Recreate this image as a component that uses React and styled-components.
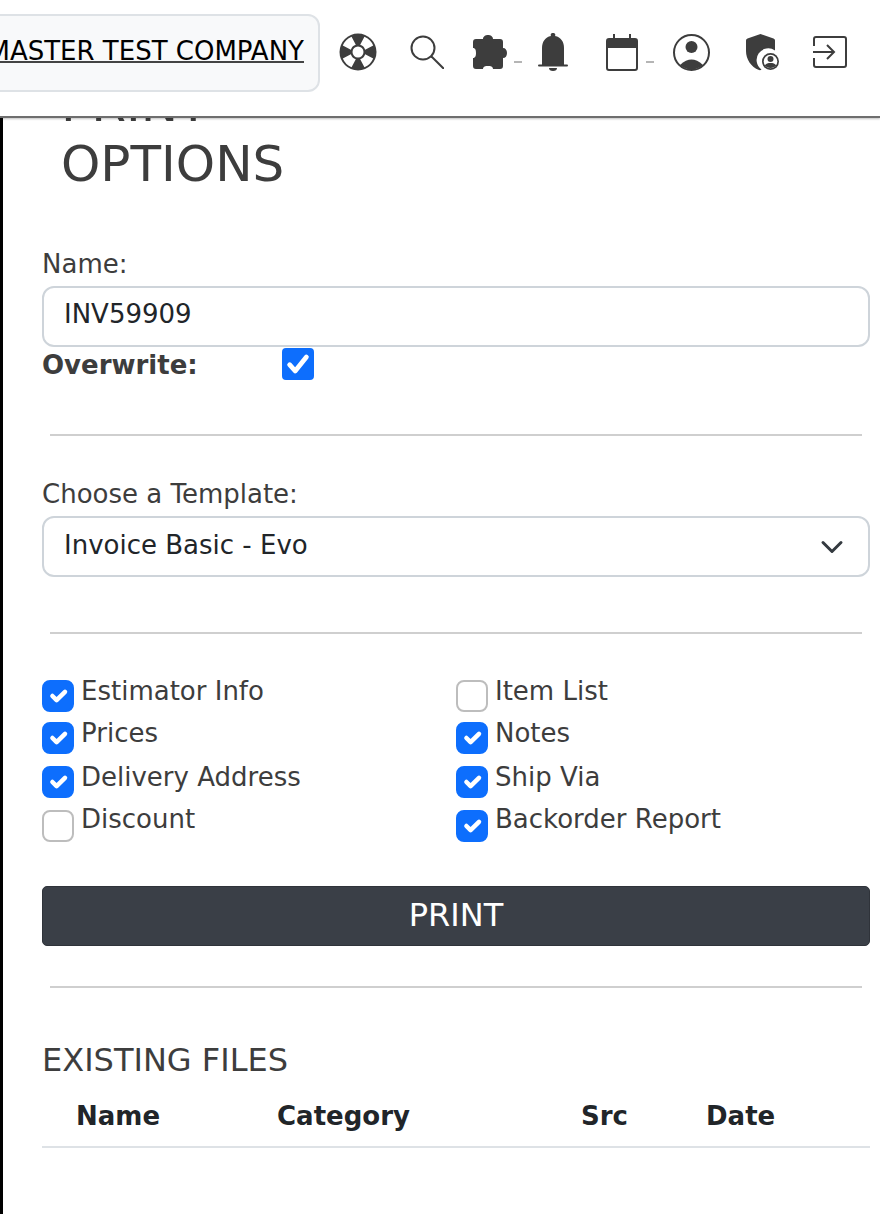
import React from 'react';
import styled, { createGlobalStyle } from 'styled-components';

const Global = createGlobalStyle`
  html, body {
    margin: 0;
    height: 100%;
    overflow: hidden;
    background: #fff;
    font-family: "DejaVu Sans", sans-serif;
    color: #3d3d3d;
  }
  * { box-sizing: border-box; }
`;

const Page = styled.div`
  width: 880px;
  height: 1214px;
  overflow: hidden;
`;

const Topbar = styled.header`
  position: relative;
  z-index: 2;
  height: 118px;
  display: flex;
  justify-content: flex-end;
  align-items: flex-start;
  padding: 14px 22px 0 0;
  background: #fff;
  border-bottom: 2px solid #6e6e6e;
  box-shadow: 0 1px 2px rgba(0, 0, 0, 0.25);
`;

const Company = styled.a`
  flex-shrink: 0;
  height: 78px;
  display: flex;
  align-items: center;
  padding: 0 14px 4px 40px;
  margin-right: 2px;
  background: #f8f9fa;
  border: 2px solid #dee2e6;
  border-radius: 12px;
  color: #000;
  font-size: 26px;
  text-decoration: underline;
  text-decoration-thickness: 2px;
  text-decoration-color: #444;
`;

const IconSlot = styled.div`
  position: relative;
  flex-shrink: 0;
  width: ${(p) => p.$w}px;
  height: 76px;
  display: flex;
  justify-content: center;
  align-items: center;
  color: #3d3d3d;
  svg { display: block; }
`;

const Dash = styled.span`
  position: absolute;
  left: ${(p) => p.$left}px;
  top: 47px;
  width: 8px;
  height: 2px;
  background: #b5b5b5;
`;

const Main = styled.main`
  display: flow-root;
  height: 1096px;
  border-left: 3px solid #000;
  padding: 0 10px 0 39px;
`;

const Title = styled.h1`
  width: 320px;
  margin: -44px 0 0 19px;
  font-size: 50px;
  font-weight: 400;
  line-height: 60px;
  color: #3d3d3d;
`;

const Label = styled.label`
  display: block;
  margin-bottom: 4px;
  font-size: 26px;
  line-height: 38px;
  color: #3d3d3d;
`;

const TextInput = styled.input`
  display: block;
  width: 100%;
  height: 61px;
  margin-top: -1px;
  padding: 0 20px 6px;
  background: #fff;
  border: 2px solid #ced4da;
  border-radius: 12px;
  font: inherit;
  font-size: 26px;
  color: #212529;
  outline: none;
`;

const OverwriteRow = styled.div`
  display: flex;
  align-items: flex-start;
  height: 34px;
  margin-top: 1px;
`;

const OverwriteLabel = styled.label`
  width: 240px;
  font-size: 26px;
  font-weight: 700;
  line-height: 34px;
`;

const Check = styled.input`
  appearance: none;
  flex-shrink: 0;
  display: block;
  width: 32px;
  height: 32px;
  margin: ${(p) => p.$mt || 0}px 0 0;
  background-color: #fff;
  border: 2px solid #bdbdbd;
  border-radius: 8px;
  &:checked {
    background-color: #0d6efd;
    border-color: #0d6efd;
    background-position: center;
    background-repeat: no-repeat;
    background-image: url("data:image/svg+xml,%3csvg xmlns='http://www.w3.org/2000/svg' viewBox='0 0 20 20'%3e%3cpath fill='none' stroke='%23fff' stroke-linecap='round' stroke-linejoin='round' stroke-width='3.2' d='m6 10 3 3 6-6'/%3e%3c/svg%3e");
  }
`;

const BigCheck = styled(Check)`
  border-radius: 4px;
  &:checked {
    background-image: url("data:image/svg+xml,%3csvg xmlns='http://www.w3.org/2000/svg' viewBox='0 0 20 20'%3e%3cpath fill='none' stroke='%23fff' stroke-linecap='round' stroke-linejoin='round' stroke-width='3.4' d='M4 10.5l4 4.5 8-10'/%3e%3c/svg%3e");
  }
`;

const Rule = styled.hr`
  margin: ${(p) => p.$top}px 8px 0;
  border: 0;
  border-top: 2px solid #cfcfcf;
`;

const Section = styled.section`
  margin-top: ${(p) => p.$top}px;
`;

const Select = styled.select`
  appearance: none;
  display: block;
  width: 100%;
  height: 61px;
  margin-top: -1px;
  padding: 0 20px 4px;
  border: 2px solid #ced4da;
  border-radius: 12px;
  font: inherit;
  font-size: 26px;
  color: #212529;
  background: #fff url("data:image/svg+xml,%3csvg xmlns='http://www.w3.org/2000/svg' viewBox='0 0 16 16'%3e%3cpath fill='none' stroke='%23343a40' stroke-linecap='round' stroke-linejoin='round' stroke-width='2' d='m2 5 6 6 6-6'/%3e%3c/svg%3e") no-repeat right 20px center / 32px 24px;
  outline: none;
`;

const Options = styled.div`
  display: grid;
  grid-template-columns: 414px 1fr;
  grid-template-rows: 42px 44px 44px 44px;
  margin-top: 38px;
`;

const Option = styled.label`
  display: flex;
  align-items: flex-start;
  gap: 7px;
  font-size: 26px;
  line-height: 39px;
  &:nth-last-child(-n + 2) {
    line-height: 35px;
  }
`;

const PrintButton = styled.button`
  display: block;
  width: 100%;
  height: 60px;
  margin-top: 40px;
  padding: 0 0 3px;
  background: #3a3f47;
  border: 1px solid #2f333a;
  border-radius: 5px;
  color: #fff;
  font: inherit;
  font-size: 32px;
`;

const SubTitle = styled.h2`
  margin: 52px 0 0;
  font-size: 32px;
  font-weight: 400;
  line-height: 40px;
  color: #3d3d3d;
`;

const Files = styled.table`
  width: 100%;
  table-layout: fixed;
  border-collapse: collapse;
  margin-top: 6px;
  color: #212529;
  font-size: 26px;
`;

const Th = styled.th`
  width: ${(p) => p.$w}px;
  height: 61px;
  padding: 0 0 0 ${(p) => p.$pad || 0}px;
  text-align: left;
  font-weight: 700;
  border-bottom: 2px solid #dee2e6;
`;

const Lifebuoy = () => (
  <svg width="38" height="38" viewBox="0 0 38 38">
    <circle cx="19" cy="19" r="18.5" fill="#3d3d3d" />
    {[45, 135, 225, 315].map((a) => (
      <path key={a} transform={`rotate(${a} 19 19)`} fill="#fff" d="M12.8 3.7A16.5 16.5 0 0 1 25.2 3.7L22.5 12.4A7.5 7.5 0 0 0 15.5 12.4Z" />
    ))}
    <circle cx="19" cy="19" r="5.5" fill="#fff" />
  </svg>
);

const Search = () => (
  <svg width="34" height="34" viewBox="0 0 34 34" fill="none" stroke="#3d3d3d" strokeWidth="2">
    <circle cx="13" cy="13" r="11.5" />
    <path d="M21.5 21.5 33.5 33.5" strokeLinecap="round" />
  </svg>
);

const Puzzle = () => (
  <svg width="34" height="34" viewBox="0 0 34 34" fill="#3d3d3d">
    <path d="M3 4H10C10 1.5 12.5 0 15 0S20 1.5 20 4H27a3 3 0 0 1 3 3V13C32.5 13 34 15 34 18S32.5 23 30 23V31a3 3 0 0 1-3 3H20C20 31.5 17.5 31 15 31S10 31.5 10 34H3a3 3 0 0 1-3-3V23C2.5 23 3 20.5 3 18S2.5 13 0 13V7a3 3 0 0 1 3-3Z" />
  </svg>
);

const Bell = () => (
  <svg width="30" height="38" viewBox="0 0 30 38" fill="#3d3d3d">
    <path d="M15 0a2 2 0 0 1 2 3C23 4 26 9 26 15V32H4V15C4 9 7 4 13 3a2 2 0 0 1 2-3Z" />
    <rect x="0" y="31.5" width="30" height="2" rx="1" />
    <path d="M11 35h8a4 3 0 0 1-8 0Z" />
  </svg>
);

const Calendar = () => (
  <svg width="32" height="37" viewBox="0 0 32 37" fill="none" stroke="#3d3d3d" strokeWidth="2">
    <rect x="1" y="5" width="30" height="31" rx="2" />
    <path d="M1 9.5h30" strokeWidth="9" />
    <path d="M8 0v5M24 0v5" />
  </svg>
);

const Person = () => (
  <svg width="37" height="37" viewBox="0 0 37 37" fill="#3d3d3d">
    <circle cx="18.5" cy="18.5" r="17.5" fill="none" stroke="#3d3d3d" strokeWidth="2" />
    <circle cx="18.5" cy="13" r="6" />
    <path d="M7 31C11 27 15 25.5 18.5 25.5S26 27 30 31A17 17 0 0 1 7 31Z" />
  </svg>
);

const ShieldUser = () => (
  <svg width="34" height="37" viewBox="0 0 34 37" fill="#3d3d3d">
    <path d="M14.5 0 27.5 4.5Q29 5 29 6.5V16.5A11 11 0 0 0 15.5 35.5Q14.5 36.5 13 36C5 33 0 25 0 17V6.5Q0 5 1.5 4.5Z" />
    <circle cx="24.5" cy="27.5" r="8.5" />
    <circle cx="24.5" cy="27.5" r="6.8" fill="#fff" />
    <circle cx="24.5" cy="25" r="3" />
    <path d="M18.8 31.5C20 29.5 22 29 24.5 29S29 29.5 30.2 31.5C29 33 27 34 24.5 34S20 33 18.8 31.5Z" />
  </svg>
);

const LogIn = () => (
  <svg width="34" height="32" viewBox="0 0 34 32" fill="none" stroke="#3d3d3d" strokeWidth="2">
    <path d="M1 10V3a2 2 0 0 1 2-2H31a2 2 0 0 1 2 2V29a2 2 0 0 1-2 2H3a2 2 0 0 1-2-2V22" />
    <path d="M0 16H21M14 9l7 7-7 7" />
  </svg>
);

const checks = [
  ['Estimator Info', true, 'Item List', false],
  ['Prices', true, 'Notes', true],
  ['Delivery Address', true, 'Ship Via', true],
  ['Discount', false, 'Backorder Report', true],
];

export default function App() {
  return (
    <Page>
      <Global />
      <Topbar>
        <Company href="#">MASTER TEST COMPANY</Company>
        <IconSlot $w={72}><Lifebuoy /></IconSlot>
        <IconSlot $w={66}><Search /></IconSlot>
        <IconSlot $w={60}><Puzzle /><Dash $left={54} /></IconSlot>
        <IconSlot $w={66}><Bell /></IconSlot>
        <IconSlot $w={72}><Calendar /><Dash $left={60} /></IconSlot>
        <IconSlot $w={66}><Person /></IconSlot>
        <IconSlot $w={78}><ShieldUser /></IconSlot>
        <IconSlot $w={56}><LogIn /></IconSlot>
      </Topbar>
      <Main>
        <Title>PRINT OPTIONS</Title>
        <Section $top={51}>
          <Label>Name:</Label>
          <TextInput defaultValue="INV59909" />
          <OverwriteRow>
            <OverwriteLabel>Overwrite:</OverwriteLabel>
            <BigCheck type="checkbox" defaultChecked />
          </OverwriteRow>
        </Section>
        <Rule $top={52} />
        <Section $top={39}>
          <Label>Choose a Template:</Label>
          <Select defaultValue="evo">
            <option value="evo">Invoice Basic - Evo</option>
          </Select>
        </Section>
        <Rule $top={55} />
        <Options>
          {checks.flatMap(([a, aOn, b, bOn]) => [
            <Option key={a}><Check type="checkbox" $mt={8} defaultChecked={aOn} />{a}</Option>,
            <Option key={b}><Check type="checkbox" $mt={8} defaultChecked={bOn} />{b}</Option>,
          ])}
        </Options>
        <PrintButton>PRINT</PrintButton>
        <Rule $top={40} />
        <SubTitle>EXISTING FILES</SubTitle>
        <Files>
          <thead>
            <tr>
              <Th $w={235} $pad={34}>Name</Th>
              <Th $w={304}>Category</Th>
              <Th $w={125}>Src</Th>
              <Th>Date</Th>
            </tr>
          </thead>
        </Files>
      </Main>
    </Page>
  );
}
